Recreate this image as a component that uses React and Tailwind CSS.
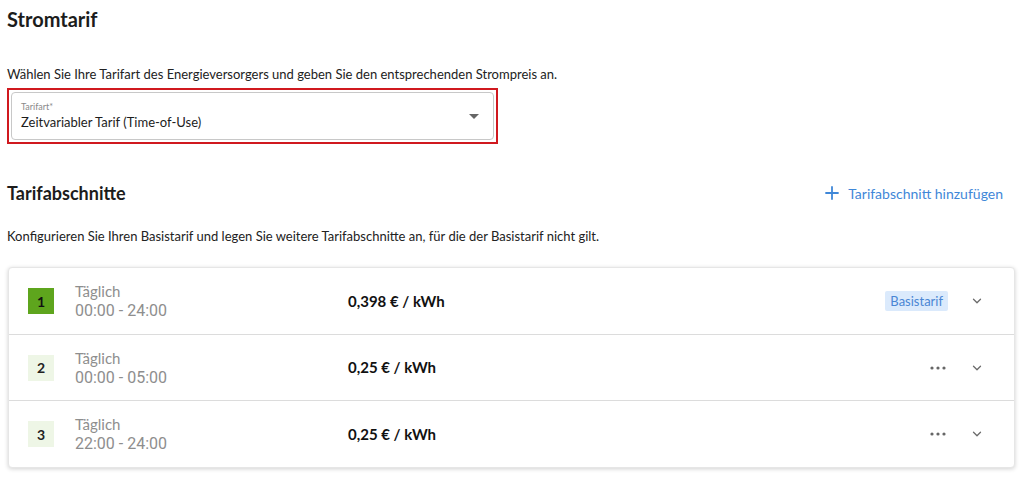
import React from "react";

const Chevron = () => (
  <svg width="14" height="14" viewBox="0 0 24 24" fill="none" stroke="#6b6b6b" strokeWidth="2.2" strokeLinecap="round" strokeLinejoin="round">
    <path d="M6 9l6 6 6-6" />
  </svg>
);

const Dots = () => (
  <svg width="16" height="4" viewBox="0 0 16 4" fill="#666" className="mr-[2px]">
    <circle cx="2" cy="2" r="1.6" />
    <circle cx="8" cy="2" r="1.6" />
    <circle cx="14" cy="2" r="1.6" />
  </svg>
);

const rows = [
  { n: "1", time: "00:00 - 24:00", price: "0,398 € / kWh", base: true },
  { n: "2", time: "00:00 - 05:00", price: "0,25 € / kWh", base: false },
  { n: "3", time: "22:00 - 24:00", price: "0,25 € / kWh", base: false },
];

export default function App() {
  return (
    <div className="w-[1024px] h-[477px] bg-white overflow-hidden text-[#1a1a1a]" style={{ fontFamily: "Lato, 'Open Sans', sans-serif" }}>
      <div className="pl-[7px] pr-[9px] pt-[6px]">
        <h1 className="text-[20px] font-bold leading-[26px] text-[#1c1c1c]">Stromtarif</h1>
        <p className="mt-[33px] text-[13px] leading-[18px] text-[#222]">
          Wählen Sie Ihre Tarifart des Energieversorgers und geben Sie den entsprechenden Strompreis an.
        </p>
        <div className="mt-[5px] w-[491px] border-2 border-[#d0191f] p-[2px]">
          <div className="h-[48px] rounded-[4px] border border-[#c8c8c8] flex items-center pl-[9px] pr-[14px]">
            <div className="flex-1">
              <div className="text-[9px] leading-[11px] text-[#8a8a8a]">Tarifart*</div>
              <div className="text-[13px] leading-[18px] text-[#1c1c1c] mt-[1px]">Zeitvariabler Tarif (Time-of-Use)</div>
            </div>
            <svg width="10" height="5" viewBox="0 0 10 5" fill="#666"><path d="M0 0h10L5 5z" /></svg>
          </div>
        </div>

        <div className="mt-[37px] flex items-center justify-between">
          <h2 className="text-[18px] font-bold leading-[24px] text-[#1c1c1c]">Tarifabschnitte</h2>
          <button className="flex items-center gap-[9px] text-[14px] text-[#3f87d8] mr-[12px]">
            <svg width="14" height="14" viewBox="0 0 14 14" stroke="#3f87d8" strokeWidth="1.8" strokeLinecap="round"><path d="M7 1v12M1 7h12" /></svg>
            Tarifabschnitt hinzufügen
          </button>
        </div>
        <p className="mt-[23px] text-[13px] leading-[17px] text-[#222]">
          Konfigurieren Sie Ihren Basistarif und legen Sie weitere Tarifabschnitte an, für die der Basistarif nicht gilt.
        </p>

        <div className="mt-[22px] ml-[1px] rounded-[4px] bg-white shadow-[0_1px_4px_rgba(0,0,0,0.18)] border border-[#e6e6e6]">
          {rows.map((r, i) => (
            <div key={r.n} className={`h-[66px] flex items-center pl-[19px] pr-[30px] ${i > 0 ? "border-t border-[#dcdcdc]" : ""} ${i === 2 ? "h-[67px]" : ""}`}>
              <div className={`w-[26px] h-[26px] flex items-center justify-center text-[14px] font-bold ${r.base ? "bg-[#5ea51d] text-[#111]" : "bg-[#eef6e6] text-[#222]"}`}>
                {r.n}
              </div>
              <div className="ml-[21px] w-[273px] text-[#8e8e8e]">
                <div className="text-[15px] leading-[20px]">Täglich</div>
                <div className="text-[16px] leading-[20px]" style={{ fontFamily: "Roboto, sans-serif" }}>{r.time}</div>
              </div>
              <div className="flex-1 text-[15px] font-bold text-[#111]">{r.price}</div>
              {r.base ? (
                <span className="bg-[#dbeafc] text-[#4a86d4] text-[13px] leading-[20px] px-[5px] rounded-[2px]">Basistarif</span>
              ) : (
                <Dots />
              )}
              <div className="ml-[22px]"><Chevron /></div>
            </div>
          ))}
        </div>
      </div>
    </div>
  );
}
